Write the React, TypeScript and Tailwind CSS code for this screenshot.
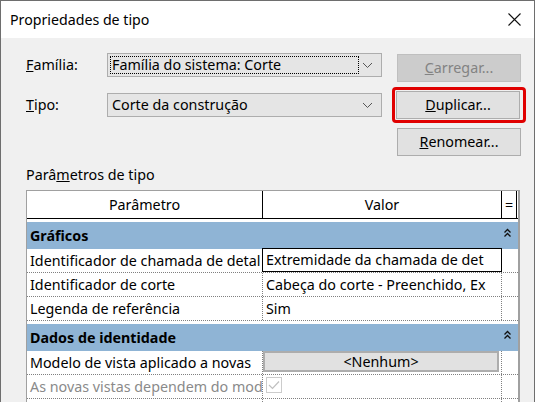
import React from "react";

const font = { fontFamily: '"Noto Sans", "Liberation Sans", sans-serif' };

function Chevron() {
  return (
    <svg width="11" height="7" viewBox="0 0 11 7" className="shrink-0">
      <path d="M1 1 L5.5 5.5 L10 1" fill="none" stroke="#555" strokeWidth="1" />
    </svg>
  );
}

function Collapse() {
  return (
    <svg width="9" height="10" viewBox="0 0 9 10">
      <path d="M1.5 4.5 L4.5 1.5 L7.5 4.5 M1.5 8.5 L4.5 5.5 L7.5 8.5" fill="none" stroke="#111" strokeWidth="1.3" />
    </svg>
  );
}

function Combo({ children, focus }: { children: React.ReactNode; focus?: boolean }) {
  return (
    <div className="flex h-[24px] w-[275px] items-center border border-[#adadad] bg-[#e5e5e5] pl-[2px] pr-[8px]">
      <div
        className={
          "flex h-[18px] w-[249px] items-center px-[1px] " +
          (focus ? "border border-dotted border-black" : "border border-transparent")
        }
      >
        {children}
      </div>
      <div className="ml-auto">
        <Chevron />
      </div>
    </div>
  );
}

function Btn({ children, disabled }: { children: React.ReactNode; disabled?: boolean }) {
  return (
    <div
      className={
        "flex h-[28px] w-[124px] items-center justify-center border " +
        (disabled ? "border-[#bfbfbf] bg-[#cccccc] text-[#838383]" : "border-[#adadad] bg-[#e1e1e1] text-black")
      }
    >
      {children}
    </div>
  );
}

function Group({ label }: { label: string }) {
  return (
    <div className="pt-[3px]">
      <div className="flex h-[27px] items-start justify-between bg-[#8fb4d5] pl-[3px] pr-[6px]">
        <span className="mt-[3px] font-bold">{label}</span>
        <span className="mt-[6px]">
          <Collapse />
        </span>
      </div>
    </div>
  );
}

function Row({ name, value, dim }: { name: string; value: React.ReactNode; dim?: boolean }) {
  return (
    <div className="flex h-[24px] border-b border-dotted border-[#808080]">
      <div
        className={
          "w-[236px] overflow-hidden whitespace-nowrap border-r border-dotted border-[#808080] pl-[3px] leading-[23px] " +
          (dim ? "text-[#8a8a8a]" : "")
        }
      >
        {name}
      </div>
      <div className="w-[239px] whitespace-nowrap border-r border-dotted border-[#808080]">{value}</div>
      <div className="w-[15px]" />
    </div>
  );
}

export default function App() {
  return (
    <div
      className="flex h-[402px] w-[535px] flex-col overflow-hidden border-x border-t border-[#6e6e6e] bg-[#f0f0f0] text-[14.3px] text-black"
      style={font}
    >
      <div className="flex h-[37px] shrink-0 items-center justify-between bg-white pl-[9px] pr-[13px]">
        <span className="text-[14.2px]">Propriedades de tipo</span>
        <svg width="13" height="13" viewBox="0 0 13 13">
          <path d="M0.5 0.5 L12.5 12.5 M12.5 0.5 L0.5 12.5" stroke="#111" strokeWidth="1.1" />
        </svg>
      </div>

      <div className="flex pl-[25px] pt-[15px]">
        <div className="flex flex-col gap-[16px]">
          <div className="flex items-center">
            <span className="w-[81px]">
              <u>F</u>amília:
            </span>
            <Combo focus>Família do sistema: Corte</Combo>
          </div>
          <div className="flex items-center">
            <span className="w-[81px]">
              <u>T</u>ipo:
            </span>
            <Combo>Corte da construção</Combo>
          </div>
        </div>
        <div className="ml-[15px] mt-[1px] flex flex-col gap-[10px]">
          <Btn disabled>
            <span>
              <u>C</u>arregar...
            </span>
          </Btn>
          <div className="-m-[5px] rounded-[4px] border-[3px] border-[#e00000] p-[1px]">
            <Btn>
              <span>
                <u>D</u>uplicar...
              </span>
            </Btn>
          </div>
          <Btn>
            <span>
              <u>R</u>enomear...
            </span>
          </Btn>
        </div>
      </div>

      <div className="mt-[8px] pl-[25px]">
        Parâ<u>m</u>etros de tipo
      </div>

      <div className="ml-[25px] mt-[5px] w-[494px] flex-1 border-l border-t border-r-2 border-[#a0a0a0] bg-white">
        <div className="flex h-[28px] border-b border-black">
          <div className="flex w-[236px] items-center justify-center border-r border-black">Parâmetro</div>
          <div className="flex w-[239px] items-center justify-center border-r border-black">Valor</div>
          <div className="flex w-[15px] items-center justify-center border-r border-black">=</div>
        </div>
        <Group label="Gráficos" />
        <Row
          name="Identificador de chamada de detal"
          value={
            <div className="-ml-px -mr-px -mt-px h-[24px] overflow-hidden border border-black pl-[3px] leading-[22px]">
              Extremidade da chamada de det
            </div>
          }
        />
        <Row name="Identificador de corte" value={<div className="overflow-hidden pl-[3px] leading-[23px]">Cabeça do corte - Preenchido, Ex</div>} />
        <Row name="Legenda de referência" value={<div className="pl-[3px] leading-[23px]">Sim</div>} />
        <Group label="Dados de identidade" />
        <Row
          name="Modelo de vista aplicado a novas"
          value={
            <div className="mr-[2px] flex h-[21px] items-center justify-center border-2 border-[#adadad] bg-[#e1e1e1]">
              &lt;Nenhum&gt;
            </div>
          }
        />
        <Row
          name="As novas vistas dependem do mod"
          dim
          value={
            <div className="ml-[3px] mt-[2px] flex h-[16px] w-[16px] items-center justify-center border border-[#cccccc]">
              <svg width="12" height="10" viewBox="0 0 12 10">
                <path d="M1 5 L4.5 8.5 L11 1.5" fill="none" stroke="#c0c0c0" strokeWidth="1.2" />
              </svg>
            </div>
          }
        />
        <Row name="" value={null} />
      </div>
    </div>
  );
}
